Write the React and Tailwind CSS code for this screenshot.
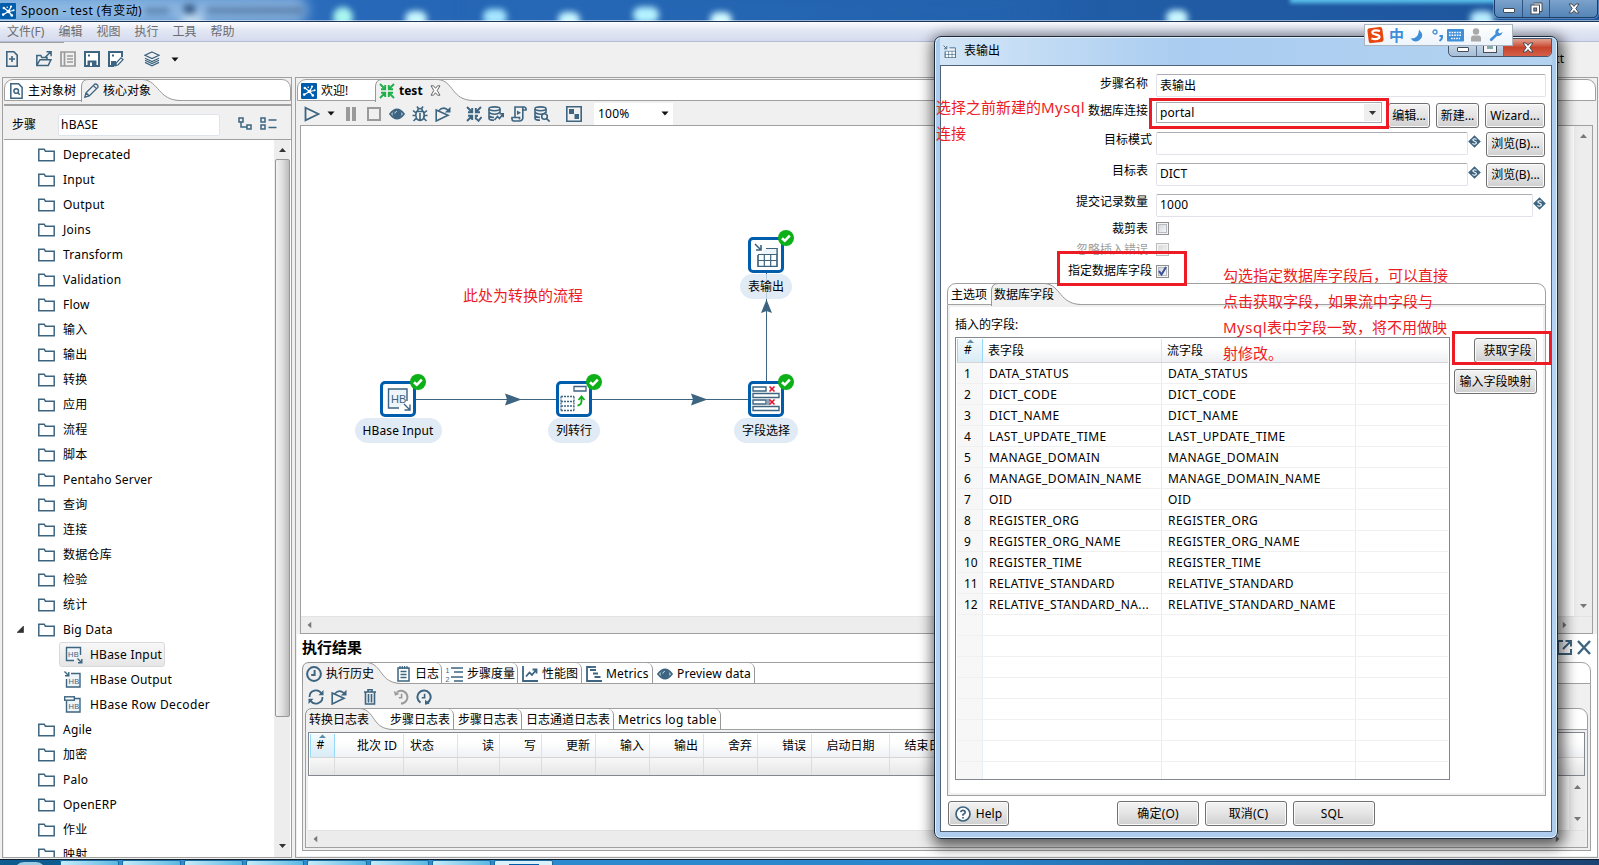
import React from "react";

const INK = "#3d6480";

const treeItems = [
  "Deprecated", "Input", "Output", "Joins", "Transform", "Validation", "Flow",
  "输入", "输出", "转换", "应用", "流程", "脚本", "Pentaho Server", "查询", "连接",
  "数据仓库", "检验", "统计",
];
const treeTail = ["Agile", "加密", "Palo", "OpenERP", "作业", "映射"];

const fields = [
  "DATA_STATUS", "DICT_CODE", "DICT_NAME", "LAST_UPDATE_TIME", "MANAGE_DOMAIN",
  "MANAGE_DOMAIN_NAME", "OID", "REGISTER_ORG", "REGISTER_ORG_NAME", "REGISTER_TIME",
  "RELATIVE_STANDARD", "RELATIVE_STANDARD_NAME",
];

const logColumns = [
  { name: "批次 ID", cls: "w-[69px] justify-end pr-[6px]" },
  { name: "状态", cls: "w-[54px] pl-[6px]" },
  { name: "读", cls: "w-[42px] justify-end pr-[5px]" },
  { name: "写", cls: "w-[42px] justify-end pr-[5px]" },
  { name: "更新", cls: "w-[54px] justify-end pr-[5px]" },
  { name: "输入", cls: "w-[54px] justify-end pr-[5px]" },
  { name: "输出", cls: "w-[54px] justify-end pr-[5px]" },
  { name: "舍弃", cls: "w-[54px] justify-end pr-[5px]" },
  { name: "错误", cls: "w-[54px] justify-end pr-[5px]" },
  { name: "启动日期", cls: "w-[78px] justify-center" },
  { name: "结束日期", cls: "w-[78px] justify-center" },
];

function Icon({ w = 16, h = 16, color = INK, sw = 1.6, className = "", children }) {
  return (
    <svg
      width={w}
      height={h}
      viewBox={`0 0 ${w} ${h}`}
      fill="none"
      stroke={color}
      strokeWidth={sw}
      className={`block shrink-0 ${className}`}
    >
      {children}
    </svg>
  );
}

const Caret = ({ className = "" }) => (
  <Icon w={8} h={5} className={className}>
    <path d="M0.5 0.5h7L4 4.5z" fill="#111" stroke="none" />
  </Icon>
);

const SpoonLogo = () => (
  <Icon color="#fff" sw={1.2}>
    <rect width="16" height="16" rx="1" fill="#005dab" stroke="none" />
    <path d="M8.5 8.5L4 5M8.5 8.5L11 4M8.5 8.5L13.5 7.5M8.5 8.5L11.5 12M8.5 8.5L3.5 11.5" />
    <g fill="#fff" stroke="none">
      <circle cx="8.5" cy="8.5" r="1.8" />
      <circle cx="3.8" cy="5" r="1.2" />
      <circle cx="11" cy="3.5" r="1.1" />
      <circle cx="13.6" cy="7.3" r="1" />
      <circle cx="11.8" cy="12.4" r="1.3" />
      <circle cx="3.2" cy="11.6" r="1.3" />
      <circle cx="7.2" cy="4.3" r="0.8" />
    </g>
  </Icon>
);

const Folder = () => (
  <Icon w={17} h={14} sw={1.5}>
    <path d="M0.8 12.8V1.2h5.4l1.2 2h8.8v9.6z" fill="#fff" />
  </Icon>
);

const Play = () => (
  <Icon sw={1.8}>
    <path d="M1.5 1.8L14.5 8L1.5 14.2z" />
  </Icon>
);

const Replay = () => (
  <Icon sw={1.6}>
    <path d="M1.2 4v11L13 9.2L1.2 4zM4 4.5Q8 0 13 4" />
    <path d="M15.5 0.8v5.7h-5.7z" fill={INK} stroke="none" />
  </Icon>
);

const Eye = () => (
  <Icon sw={1.8}>
    <path d="M1 8Q8 -1.2 15 8Q8 17.2 1 8z" />
    <circle cx="8" cy="8" r="4.6" fill={INK} stroke="none" />
    <path d="M5.8 7.5Q6 5.8 7.8 5.3" stroke="#cfe0ea" strokeWidth="1" />
  </Icon>
);

const Converge = ({ color = INK, check }) => (
  <Icon color={color} sw={1.9}>
    <path d="M1 1l5 5M6.2 2v4.2H2M15 1l-5 5M9.8 2v4.2H14M1 15l5-5M2 9.8h4.2V14" />
    {check ? <path d="M9.8 13.5v-3.7H12M10.5 12.8l2 2L15.6 11" /> : <path d="M15 15l-5-5M14 9.8H9.8V14" />}
  </Icon>
);

const Db = ({ children }) => (
  <Icon sw={1.6}>
    <ellipse cx="6.5" cy="2.8" rx="5.5" ry="1.9" />
    <path d="M1 3v9.5Q1.3 14 6 14.3M12 3v4M1 6.2Q3 8.2 6.5 8.2T12 6.2M1 10Q3 11.4 6 11.5" />
    {children}
  </Icon>
);

const Clock = () => (
  <Icon sw={2}>
    <circle cx="8" cy="8" r="6.9" />
    <path d="M8.6 4v5H5.2" />
  </Icon>
);

const History = ({ color = INK, flip }) => (
  <Icon color={color} sw={2}>
    {flip ? (
      <>
        <path d="M4.5 13.6A6.6 6.6 0 1 1 11 13.9" />
        <path d="M9 10.8v5l4.6-1z" fill={color} stroke="none" />
      </>
    ) : (
      <>
        <path d="M4 3.2A6.4 6.4 0 1 1 8 14.6" />
        <path d="M0.8 2l1.2 4.8L6.4 5z" fill={color} stroke="none" />
      </>
    )}
    <path d="M8.6 4.8v4H5.8" strokeWidth="1.6" />
  </Icon>
);

const HBaseIcon = ({ kind }) => (
  <Icon w={18} h={18} sw={1.4}>
    {kind === "input" && (
      <>
        <path d="M15.5 9V1.5H1.5v13H9" fill="#eef5fa" />
        <path d="M12.5 12.5l4 4M16.8 13v3.8H13" />
      </>
    )}
    {kind === "output" && (
      <>
        <path d="M7 2.5h9v13.5H2.5V8" fill="#eef5fa" />
        <path d="M0.5 0.5l4 4M4.8 1v3.8H1" />
      </>
    )}
    {kind === "decoder" && (
      <>
        <path d="M11 2.5h5V16H2.5V5" fill="#eef5fa" />
        <rect x="0.7" y="0.8" width="9.6" height="3.4" fill="#fff" />
      </>
    )}
    <text
      x={kind === "input" ? 3 : 4.5}
      y={kind === "input" ? 10.5 : 12.5}
      fontSize="7.5"
      fontFamily="Liberation Sans, sans-serif"
      fill={INK}
      stroke="none"
    >
      HB
    </text>
  </Icon>
);

const TableIcon = ({ size = 24 }) => (
  <svg width={size} height={size} viewBox="0 0 24 24" fill="none" stroke={INK} strokeWidth="1.2" className="block shrink-0">
    <path d="M12 5.5h11v18.5H4V12" fill="#fff" />
    <path d="M12 5.5h11V11H6z" fill="#eef5fa" stroke="none" />
    <path d="M4 11.5h19M4 17.5h19M10.3 11.5V24M16.7 11.5V24M12 5.5h11V23.4H4V12" />
    <path d="M1 1l5.5 5.5M7 2v5H2" strokeWidth="1.6" />
  </svg>
);

const Param = () => (
  <Icon w={13} h={13}>
    <path d="M6.5 0.2L12.8 6.5L6.5 12.8L0.2 6.5z" fill={INK} stroke="none" />
    <path d="M8.6 4.4Q6.5 3 4.9 4.4Q4.6 5.8 6.5 6.3Q8.8 7 8.2 8.4Q6.6 10 4.4 8.4" stroke="#fff" strokeWidth="1.1" />
  </Icon>
);

// Selected tab: rounded on the left, swooping curve on the right
function CurveTab({ w, flat, className = "", children }) {
  return (
    <div className={`relative -mt-px -mb-px h-[23px] shrink-0 ${className}`}>
      <svg width={w} height="23" className="absolute left-0 top-0" fill="none">
        <path
          d={`M0.5 23V7Q1 0.5 7 0.5H${flat}C${flat + 16} 2 ${w - 22} 21 ${w} 21.5V23z`}
          fill="#f0f0f0"
        />
        <path
          d={`M0.5 23V7Q1 0.5 7 0.5H${flat}C${flat + 16} 2 ${w - 22} 21 ${w} 21.5`}
          stroke="#979797"
        />
      </svg>
      <div className="relative flex h-[22px] items-center pt-px">{children}</div>
    </div>
  );
}

function Strip({ className = "", children }) {
  return (
    <div className={`flex h-[22px] shrink-0 rounded-t-[9px] border border-[#a0a0a0] bg-white ${className}`}>
      {children}
    </div>
  );
}

function Tab({ className = "", children }) {
  return (
    <div className={`relative flex h-[20px] shrink-0 items-center rounded-tr-[6px] border-r border-[#979797] pt-px whitespace-nowrap ${className}`}>
      {children}
    </div>
  );
}

function Btn({ className = "", children }) {
  return (
    <button
      className={`flex h-[25px] shrink-0 items-center justify-center rounded-[3px] border border-[#707070] bg-linear-to-b from-[#f3f3f3] from-0% via-[#e4e4e4] via-50% to-[#cfcfcf] whitespace-nowrap shadow-[inset_0_0_0_1px_#fbfbfb] ${className}`}
    >
      {children}
    </button>
  );
}

function Arrow({ dir, dim }) {
  const rot = { up: "rotate-180", down: "", left: "rotate-90", right: "-rotate-90" }[dir];
  return (
    <Icon w={7} h={4} className={rot}>
      <path d="M0 0h7L3.5 4z" fill={dim ? "#777" : "#333"} stroke="none" />
    </Icon>
  );
}

function TitleBar() {
  return (
    <div className="relative flex h-[22px] shrink-0 items-center overflow-hidden border-b border-[#1d3557] bg-linear-to-r from-[#4a90d2] from-0% via-[#2768b8] via-22% to-[#1d559b]">
      <div className="absolute left-[500px] top-0 h-[21px] w-[560px] bg-[#2c7ac8]/45 blur-xl" />
      <div className="absolute left-[333px] top-[7px] h-5 w-5 rounded-full bg-[#a9f5f0] blur-[3px]" />
      <div className="absolute left-[180px] top-3 h-4 w-6 rounded-full bg-white/80 blur-[4px]" />
      <div className="absolute -left-8 -top-1 h-7 w-[340px] rounded-full bg-[#a9cbea]/70 blur-[6px]" />
      <div className="absolute left-[405px] top-[11px] h-4 w-[22px] rounded-full bg-[#c8f7ff] blur-[3px]" />
      <div className="absolute left-[483px] top-[9px] h-4 w-[24px] rounded-full bg-[#a5e6ff] blur-[3px]" />
      <div className="absolute left-[558px] top-[12px] h-4 w-[22px] rounded-full bg-[#c8f7ff] blur-[3px]" />
      <div className="absolute left-[633px] top-[7px] h-4 w-[26px] rounded-full bg-[#b4f2ff] blur-[3px]" />
      <div className="absolute left-[710px] top-[12px] h-4 w-[22px] rounded-full bg-[#d2faff] blur-[3px]" />
      <div className="absolute left-[1166px] top-[10px] h-4 w-[22px] rounded-full bg-[#c8f7ff] blur-[3px]" />
      <div className="absolute left-[1290px] -top-[7px] h-[10px] w-[280px] bg-[#5cc4ee] blur-[2px]" />
      <div className="absolute left-[1470px] top-[11px] h-4 w-6 rounded-full bg-[#b9ecff] blur-[3px]" />
      <div className="absolute left-[184px] top-[5px] h-[8px] w-[11px] bg-[#173a68]/80 blur-[3px]" />
      <div className="absolute left-[145px] top-[8px] h-[6px] w-[24px] bg-[#173a68]/40 blur-[3px]" />
      <div className="absolute left-[207px] top-[7px] h-[7px] w-[96px] bg-[#17345f]/35 blur-[3px]" />
      <div className="absolute left-0 bottom-0 h-px w-full bg-white/50" />
      <div className="relative"><SpoonLogo /></div>
      <span className="relative pl-[5px] text-[12px] tracking-[0.42px]">Spoon - test (有变动)</span>
      <div className="absolute left-[1494px] -top-px flex h-[19px] w-[104px] rounded-b-[5px] border border-[#1b3d68] bg-linear-to-b from-[#7ba2ca] to-[#5485b8] shadow-[0_0_0_1px_#9dbfe070]">
        <div className="flex w-[28px] items-center justify-center border-r border-[#2d5482]">
          <span className="mt-1 h-[5px] w-[12px] rounded-[1px] border border-[#444a55] bg-white" />
        </div>
        <div className="flex w-[27px] items-center justify-center border-r border-[#2d5482]">
          <Icon w={13} h={13} color="#444a55" sw={1}>
            <path d="M3.5 1h8.5v8.5h-2.5" fill="#fff" />
            <rect x="1" y="3" width="8.5" height="9" fill="#fff" />
            <rect x="3.8" y="6" width="2.8" height="3" fill="#6d96c0" />
          </Icon>
        </div>
        <div className="flex grow items-center justify-center">
          <CloseGlyph />
        </div>
      </div>
    </div>
  );
}

const CloseGlyph = () => (
  <Icon w={12} h={11} color="#444a55" sw={1}>
    <path d="M1 1h3l2 2.4L8 1h3L7.8 5.5L11 10H8L6 7.6L4 10H1l3.2-4.5z" fill="#fff" />
  </Icon>
);

function MainToolbar() {
  return (
    <div className="relative flex h-[35px] shrink-0 items-center bg-[#f0f0f0] pb-px pl-[6px]">
      <div className="absolute left-0 top-0 h-px w-16 bg-[#a0a0a0]" />
      <Icon w={12}>
        <path d="M0.8 0.8h7l3.4 3.4v11H0.8zM6 5v6M3 8h6" />
      </Icon>
      <Icon className="ml-[18px]" sw={1.5}>
        <path d="M0.8 14.5V4.5h4l1 2H11v2M0.8 14.5L4 8.7h11l-2.8 5.8zM9.5 6L14.5 1M10.5 0.8h4.6v4.5" />
      </Icon>
      <Icon className="ml-2" color="#9a9a9a" sw={2}>
        <path d="M1 1h14v14H1zM4.5 1v14M7 5h6M7 8h6M7 11h6" strokeWidth="1.7" />
      </Icon>
      <Icon className="ml-2" sw={2}>
        <path d="M1 1h14v14H1z" fill="#fff" />
        <path d="M3.5 9.5h9V15h-9z" fill={INK} stroke="none" />
        <path d="M6 11.5h2V15H6z" fill="#fff" stroke="none" />
        <path d="M4 4.5h2" />
      </Icon>
      <Icon className="ml-2" sw={2}>
        <path d="M14 6V1H1v14h5" fill="#fff" />
        <path d="M3 10h5v5H3z" fill={INK} stroke="none" />
        <path d="M4 4.5h2" />
        <path d="M7.5 14.7l0.8-2.8L13 6.8l2 1.8l-4.8 5.2z" fill="#fff" strokeWidth="1.3" />
      </Icon>
      <Icon className="ml-5" sw={1.2}>
        <path d="M8 1l7 3.3L8 7.6L1 4.3zM1 7.2l7 3.4l7-3.4M1 9.2l7 3.4l7-3.4M1 11.4l7 3.4l7-3.4" />
      </Icon>
      <Caret className="ml-[11px]" />
      <span className="ml-auto mr-[35px]">Connect</span>
    </div>
  );
}

function TreeRow({ label }) {
  return (
    <div className="flex h-[25px] shrink-0 items-center pl-[34px]">
      <Folder />
      <span className="pl-[8px]">{label}</span>
    </div>
  );
}

function Sidebar() {
  return (
    <aside className="ml-[2px] flex h-[781px] w-[290px] shrink-0 flex-col border border-[#a0a0a0] bg-[#f0f0f0] pt-px pl-px">
      <Strip>
        <div className="flex w-[76px] items-center pt-px pl-[5px]">
          <Icon w={13} sw={1.5}>
            <path d="M0.8 0.8h7.7l3.6 3.6v10.8H0.8z" />
            <circle cx="6.2" cy="8" r="2.3" />
            <path d="M7.8 9.8l2 2" />
          </Icon>
          <span className="pl-[5px]">主对象树</span>
        </div>
        <CurveTab w={99} flat={62} className="w-[99px]">
          <Icon w={15} h={15} sw={1.3} className="ml-[3px]">
            <path d="M0.8 14.2l1.2-4.4L10.6 1.2q1.4-0.6 2.6 0.6t0.6 2.6L5.2 13zM2 9.8l3.2 3.2M9.4 2.6l3 3" />
          </Icon>
          <span className="pl-[4px]">核心对象</span>
        </CurveTab>
      </Strip>
      <div className="mt-[3px] h-[2px] shrink-0 bg-[#a0a0a0]" />
      <div className="flex h-[34px] shrink-0 items-center border-b border-[#a0a0a0] pt-[4px] pl-[8px]">
        <span>步骤</span>
        <div className="ml-[22px] flex h-[22px] w-[162px] items-center rounded-[2px] border border-[#dfe3ec] bg-white pl-[2px] tracking-[0.2px]">hBASE</div>
        <Icon w={14} h={13} sw={1.5} className="-mt-[3px] ml-[18px]">
          <path d="M1 1h4v4H1zM9 8h4v4H9zM3 5v5h6" />
        </Icon>
        <Icon w={17} h={13} sw={1.5} className="-mt-[3px] ml-[8px]">
          <path d="M1 1h4v4H1zM1 8h4v4H1zM8.5 3h8M8.5 10.5h8" />
        </Icon>
      </div>
      <div className="flex min-h-0 grow bg-white">
        <div className="flex grow flex-col overflow-hidden pt-[2px] tracking-[0.22px]">
          {treeItems.map((t) => (
            <TreeRow key={t} label={t} />
          ))}
          <div className="flex h-[25px] shrink-0 items-center pl-[13px]">
            <Icon w={7} h={7}>
              <path d="M6.5 0v6.5H0z" fill="#333" stroke="#111" strokeWidth="0.5" />
            </Icon>
            <div className="w-[14px]" />
            <Folder />
            <span className="pl-[8px]">Big Data</span>
          </div>
          <div className="ml-[55px] flex h-[25px] w-[106px] shrink-0 items-center rounded-[3px] border border-[#d9d9d9] bg-linear-to-b from-[#f8f8f8] to-[#e6e6e6] pl-[5px] whitespace-nowrap">
            <HBaseIcon kind="input" />
            <span className="pl-[7px]">HBase Input</span>
          </div>
          <div className="flex h-[25px] shrink-0 items-center pl-[60px]">
            <HBaseIcon kind="output" />
            <span className="pl-[8px]">HBase Output</span>
          </div>
          <div className="flex h-[25px] shrink-0 items-center pl-[60px]">
            <HBaseIcon kind="decoder" />
            <span className="pl-[8px] tracking-[0.38px]">HBase Row Decoder</span>
          </div>
          {treeTail.map((t) => (
            <TreeRow key={t} label={t} />
          ))}
        </div>
        <div className="mr-px flex w-[16px] shrink-0 flex-col items-center bg-[#ededed]">
          <div className="flex h-[19px] items-center"><Arrow dir="up" /></div>
          <div className="h-[558px] w-[15px] rounded-[2px] border border-[#979797] bg-linear-to-r from-[#f4f4f4] via-[#dedede] to-[#bcbcbc]" />
          <div className="mt-auto flex h-[19px] items-center pb-[3px]"><Arrow dir="down" /></div>
        </div>
      </div>
    </aside>
  );
}

function CanvasToolbar() {
  return (
    <div className="flex h-[24px] shrink-0 items-center pt-px pl-[7px]">
      <Play />
      <Caret className="ml-[7px]" />
      <Icon w={10} h={14} className="ml-[11px]">
        <path d="M0 0h4v14H0zM6 0h4v14H6z" fill="#9a9a9a" stroke="none" />
      </Icon>
      <Icon w={14} h={14} color="#9a9a9a" sw={2} className="ml-[11px]">
        <path d="M1 1h12v12H1z" />
      </Icon>
      <div className="ml-[8px]"><Eye /></div>
      <Icon className="ml-[7px]" sw={1.6}>
        <path d="M4.5 5.5h7q1.5 4.5 0 7Q8 16.5 4.5 12.5Q3 9 4.5 5.5zM5.5 5.5Q5.5 2.500 8 2.500t2.500 3M5 0.500L6.500 2.800M11 0.500L9.500 2.800M8 7v7M4 7L1 4.500M12 7l3-2.500M3.500 9.500H0.500M12.500 9.500h3M4 12.500l-2.500 2.500M12 12.500l2.500 2.500" />
      </Icon>
      <div className="ml-[7px]"><Replay /></div>
      <div className="ml-[15px]"><Converge check /></div>
      <div className="ml-[6px]">
        <Db>
          <path d="M6.5 14l3-3.5l2 2L15 8M11.5 7.8h3.7v3.5" />
        </Db>
      </div>
      <Icon className="ml-[7px]" sw={1.6}>
        <path d="M4 11V1h9.5Q15.5 1.5 15 4h-3.2M11.8 1.5v11Q11 15 8.5 15H2.5Q0.5 14.5 1 11.5h7.500v2" />
        <path d="M6 4.500l4 2.300l-4 2.300z" fill={INK} stroke="none" />
      </Icon>
      <div className="ml-[7px]">
        <Db>
          <circle cx="10.5" cy="10.5" r="2.8" fill="#f0f0f0" />
          <path d="M12.6 12.6l3 3" />
        </Db>
      </div>
      <Icon className="ml-[16px]" sw={1.6}>
        <path d="M0.8 0.8h14.4v14.4H0.8z" />
        <path d="M3 3h5v5H3zM8.5 8h4.5v5H8.5z" fill={INK} stroke="none" />
      </Icon>
      <div className="ml-[12px] flex h-[22px] w-[79px] items-center bg-white pl-[4px] tracking-[0.2px]">
        <span className="grow">100%</span>
        <Caret className="mr-[4px]" />
      </div>
    </div>
  );
}

const Badge = () => (
  <svg width="16" height="16" viewBox="0 0 16 16" className="absolute -right-[13px] -top-[10px]">
    <circle cx="8" cy="8" r="8" fill="#0eb01a" />
    <path d="M4 8.2l2.8 2.6L11.8 5.6" fill="none" stroke="#fff" strokeWidth="2.6" />
  </svg>
);

function Node({ pos, label, children }) {
  return (
    <div className={`absolute flex w-[100px] flex-col items-center ${pos}`}>
      <div className="relative flex h-[36px] w-[36px] items-center justify-center rounded-[5px] border-[3px] border-[#005dab] bg-white">
        {children}
        <Badge />
      </div>
      <div className="mt-px flex h-[25px] items-center rounded-full bg-[#d9e6f2]/80 px-[8px] whitespace-nowrap">{label}</div>
    </div>
  );
}

function Canvas() {
  return (
    <div className="ml-[3px] flex h-[509px] w-[1293px] shrink-0 flex-col border border-[#a0a0a0] bg-white">
      <div className="flex min-h-0 grow">
        <div className="relative grow">
          <svg width="600" height="330" className="absolute left-0 top-0" stroke={INK} strokeWidth="1">
            <path d="M115 273.5H255M291 273.5H447M465.5 255V147" fill="none" />
            <path d="M204 267.5L220.5 273.5L204 279.5L206 273.5zM390 267.5L406.5 273.5L390 279.5L392 273.5zM460 187L465.5 173.5L471 187L465.5 185z" fill={INK} stroke="none" />
          </svg>
          <Node pos="left-[47px] top-[255px] tracking-[0.12px]" label="HBase Input">
            <svg width="26" height="26" viewBox="0 0 26 26" fill="none" stroke={INK} strokeWidth="1.4">
              <path d="M22 15V3H3.5v19H14" fill="#eef5fa" />
              <path d="M19 18l5.5 5.5M25 18.5v5.5h-5.5" />
              <text x="6" y="17" fontSize="11" fontFamily="Liberation Sans, sans-serif" fill={INK} stroke="none">HB</text>
            </svg>
          </Node>
          <Node pos="left-[223px] top-[255px]" label="列转行">
            <svg width="30" height="30" viewBox="0 0 30 30" fill="none" stroke={INK} strokeWidth="1.3">
              <path d="M15 2.5h12v4.5H15z" />
              <path d="M2 12.5h13M2 17.5h13M2 22h13M2 26.5h13M2 12.5v14M15 12.5v14" strokeDasharray="2 1" />
              <path d="M18.5 21.5Q22.5 21 22.5 17v-4M19.5 16l3-3.5l3 3.5" stroke="#0eb01a" strokeWidth="1.8" />
            </svg>
          </Node>
          <Node pos="left-[415px] top-[255px]" label="字段选择">
            <svg width="30" height="30" viewBox="0 0 30 30" fill="none" stroke={INK} strokeWidth="1.4">
              <path d="M2 3h13v4H2zM2 9.5h26v4H2zM2 16h13v4H2zM2 22.5h26v4H2z" />
              <path d="M16 15h3v6h-3z" fill="#8da5b8" stroke="none" />
              <path d="M18.5 2.5l5 5M23.5 2.5l-5 5M18.5 15.5l5 5M23.5 15.5l-5 5" stroke="#e8112d" strokeWidth="1.6" />
            </svg>
          </Node>
          <Node pos="left-[415px] top-[111px]" label="表输出">
            <TableIcon />
          </Node>
          <div className="absolute left-[162px] top-[157px] text-[15px] leading-[24px] text-[#ed1c24]">此处为转换的流程</div>
        </div>
        <div className="flex w-[18px] shrink-0 flex-col items-center justify-between bg-[#ededed] py-[8px]">
          <Arrow dir="up" dim />
          <Arrow dir="down" dim />
        </div>
      </div>
      <div className="flex h-[17px] shrink-0 items-center justify-between border-t border-[#e3e3e3] bg-[#ededed] pl-[5px] pr-[24px]">
        <Arrow dir="left" dim />
        <Arrow dir="right" dim />
      </div>
    </div>
  );
}

function SortHead() {
  return (
    <div className="flex h-full shrink-0 flex-col items-center border-x border-[#96d9f9] bg-linear-to-b from-[#f3fafd] to-[#d8ecf6]">
      <Icon w={7} h={4}>
        <path d="M0 4L3.5 0.5L7 4z" fill="#5f8ba8" stroke="none" />
      </Icon>
      <span className="pr-[4px] leading-[14px]">#</span>
    </div>
  );
}

function Results() {
  return (
    <div className="flex min-h-0 grow flex-col bg-white">
      <div className="flex h-[28px] shrink-0 items-center pb-[2px] pl-[5px]">
        <span className="text-[15px] font-bold">执行结果</span>
        <div className="ml-auto flex gap-[5px] pr-[6px]">
          <Icon w={15} h={15} sw={2}>
            <path d="M6 1H1v13h13V9M6 9l7-7M8.5 1H14v5.5" />
          </Icon>
          <Icon w={14} h={15} sw={2.4}>
            <path d="M1 1l12 13M13 1L1 14" />
          </Icon>
        </div>
      </div>
      <div className="ml-[5px] mr-[6px] flex h-[189px] shrink-0 flex-col">
        <Strip>
          <CurveTab w={99} flat={65} className="-ml-px w-[92px]">
            <div className="ml-[4px]"><Clock /></div>
            <span className="pl-[4px]">执行历史</span>
          </CurveTab>
          <Tab className="w-[48px]">
            <Icon w={13} className="ml-[3px]" sw={1.5}>
              <path d="M1 2h11v13H1zM3.5 5.5h6M3.5 8.5h6M3.5 11.5h6" />
              <path d="M3 0v3M5.3 0v3M7.6 0v3M10 0v3" strokeWidth="1.2" />
            </Icon>
            <span className="pl-[5px]">日志</span>
          </Tab>
          <Tab className="w-[76px]">
            <Icon w={18} className="ml-[3px]" sw={1.6}>
              <path d="M6 2h12M9 6h9M6 11h12M9 15h9" />
              <text x="0.5" y="6.5" fontSize="7" fontFamily="Liberation Sans, sans-serif" fill={INK} stroke="none">1</text>
              <text x="0.5" y="15.5" fontSize="7" fontFamily="Liberation Sans, sans-serif" fill={INK} stroke="none">2</text>
            </Icon>
            <span className="pl-[4px]">步骤度量</span>
          </Tab>
          <Tab className="w-[64px]">
            <Icon className="ml-[4px]" sw={1.8}>
              <path d="M1 0v15h15M4 10.5l3.5-4L10 9l4-5M10.5 3.5h4v4" />
            </Icon>
            <span className="pl-[4px]">性能图</span>
          </Tab>
          <Tab className="w-[71px] tracking-[0.15px]">
            <Icon className="ml-[4px]" sw={1.8}>
              <path d="M5 1H1v14h15M4 4h6M7 7.5h5M8.5 11h6" />
              <path d="M5 1h5" />
            </Icon>
            <span className="pl-[4px]">Metrics</span>
          </Tab>
          <Tab className="w-[102px] tracking-[0.17px]">
            <div className="ml-[4px]"><Eye /></div>
            <span className="pl-[4px]">Preview data</span>
          </Tab>
        </Strip>
        <div className="flex min-h-0 grow flex-col border-x border-b border-[#a0a0a0] bg-[#f0f0f0] px-[2px] pb-[2px]">
          <div className="flex h-[24px] shrink-0 items-center pt-[2px] pl-[3px]">
            <Icon sw={1.8}>
              <path d="M1.5 8A6.5 6.5 0 0 1 13.5 4.5M14.5 8A6.5 6.5 0 0 1 2.5 11.5" />
              <path d="M15.5 1v5.2h-5zM0.5 15V9.8h5z" fill={INK} stroke="none" />
            </Icon>
            <div className="ml-[7px]"><Replay /></div>
            <Icon w={12} className="ml-[17px]" sw={1.6}>
              <path d="M0 3h12M4 2.5V0.8h4v1.7M1.5 3.5V15h9V3.5M4.500 5v8.500M7.500 5v8.500" />
            </Icon>
            <div className="ml-[17px]"><History color="#9a9a9a" /></div>
            <div className="ml-[7px]"><History flip /></div>
          </div>
          <Strip>
            <CurveTab w={88} flat={55} className="-ml-px w-[80px]">
              <span className="pl-[4px] whitespace-nowrap">转换日志表</span>
            </CurveTab>
            <Tab className="w-[69px] pl-[5px]">步骤日志表</Tab>
            <Tab className="w-[68px] pl-[4px]">步骤日志表</Tab>
            <Tab className="w-[92px] pl-[4px]">日志通道日志表</Tab>
            <Tab className="w-[107px] pl-[4px] tracking-[0.29px]">Metrics log table</Tab>
          </Strip>
          <div className="flex min-h-0 grow flex-col border-x border-b border-[#a0a0a0] px-[2px] pt-[2px]">
            <div className="flex h-[44px] shrink-0 flex-col border border-[#828790] bg-white pt-px pl-px">
              <div className="flex h-[24px] shrink-0 overflow-hidden border-b border-[#d5d5d5] bg-linear-to-b from-white from-35% to-[#eff1f4]">
                <div className="w-[25px] shrink-0 *:w-full"><SortHead /></div>
                {logColumns.map((c) => (
                  <div key={c.name} className={`flex shrink-0 items-center border-r border-[#dfe2e6] ${c.cls}`}>{c.name}</div>
                ))}
              </div>
              <div className="flex h-[17px] bg-linear-to-b from-[#f8f8f8] to-[#e6e6e6]">
                <div className="w-[25px] shrink-0 border-r border-[#dcdcdc]" />
                {logColumns.map((c) => (
                  <div key={c.name} className={`shrink-0 border-r border-[#dcdcdc] ${c.cls}`} />
                ))}
              </div>
            </div>
            <div className="flex min-h-0 grow bg-white">
              <div className="grow" />
              <div className="flex w-[16px] flex-col items-center justify-between bg-[#ededed] py-[9px]">
                <Arrow dir="up" dim />
                <Arrow dir="down" dim />
              </div>
            </div>
            <div className="flex h-[17px] shrink-0 items-center justify-between border-t border-[#e3e3e3] bg-[#ececec] pl-[4px] pr-[24px]">
              <Arrow dir="left" dim />
              <Arrow dir="right" dim />
            </div>
          </div>
        </div>
      </div>
    </div>
  );
}

function Workspace() {
  return (
    <main className="ml-[3px] flex h-[781px] w-[1303px] shrink-0 flex-col border border-[#a0a0a0] bg-[#f0f0f0] pt-px pl-px pb-px">
      <Strip className="mr-px">
        <div className="flex w-[77px] items-center pt-px pl-[3px]">
          <SpoonLogo />
          <span className="pl-[4px]">欢迎!</span>
        </div>
        <CurveTab w={98} flat={63} className="w-[98px]">
          <div className="ml-[4px]"><Converge color="#1fb04a" /></div>
          <span className="pl-[4px] font-bold">test</span>
          <Icon w={11} h={11} color="#666" sw={1} className="ml-[7px]">
            <path d="M1 0.8h2.5L5.5 3.3L7.5 0.8H10L7.2 5.500L10 10.200H7.500L5.500 7.700L3.500 10.200H1L3.800 5.500z" fill="#fff" />
          </Icon>
        </CurveTab>
      </Strip>
      <CanvasToolbar />
      <Canvas />
      <Results />
    </main>
  );
}

function Label({ children, className = "" }) {
  return <span className={`w-[206px] shrink-0 text-right ${className}`}>{children}</span>;
}

function Field({ children, className = "" }) {
  return (
    <div className={`flex h-[23px] shrink-0 items-center rounded-[2px] border border-[#e2e3ea] border-t-[#abadb3] bg-white pl-[3px] ${className}`}>
      {children}
    </div>
  );
}

function Check({ on, dim }) {
  return (
    <span className={`flex h-[13px] w-[13px] shrink-0 items-center justify-center border bg-[#f4f4f4] ${dim ? "border-[#bcbcbc]" : "border-[#8e8f8f]"}`}>
      <span className={`flex h-[9px] w-[9px] items-center justify-center border bg-linear-to-br from-[#d5d8dc] to-[#f6f6f6] ${dim ? "border-[#e6e6e6]" : "border-[#b8bcc2]"}`}>
        {on && (
          <Icon w={9} h={10} color="#3b4f9a" sw={2} className="-mt-px">
            <path d="M1 5l2.5 3.5L8 1" />
          </Icon>
        )}
      </span>
    </span>
  );
}

function FieldTable() {
  const rows = [...fields, ...Array(8).fill("")];
  return (
    <div className="flex h-[443px] w-[495px] shrink-0 flex-col overflow-hidden border border-[#828790] bg-white p-px">
      <div className="flex h-[24px] shrink-0 border-b border-[#d5d5d5] bg-linear-to-b from-white from-35% to-[#eff0f3]">
        <div className="w-[26px] shrink-0 *:w-full"><SortHead /></div>
        <div className="flex w-[179px] shrink-0 items-center border-r border-[#dfe2e6] pl-[5px]">表字段</div>
        <div className="flex w-[194px] shrink-0 items-center border-r border-[#dfe2e6] pl-[5px]">流字段</div>
      </div>
      {rows.map((f, i) => (
        <div key={i} className="flex h-[21px] shrink-0 border-b border-[#f0f0f0] *:pt-px">
          <div className="flex w-[26px] shrink-0 items-center border-r border-[#e6edf6] bg-[#f7f7f7] pl-[7px]">{f && i + 1}</div>
          <div className="flex w-[179px] shrink-0 items-center border-r border-[#e6edf6] pl-[6px] tracking-[0.42px]">
            {i === 11 ? "RELATIVE_STANDARD_NA..." : f}
          </div>
          <div className="flex w-[194px] shrink-0 items-center border-r border-[#e6edf6] pl-[6px] tracking-[0.42px]">{f}</div>
        </div>
      ))}
    </div>
  );
}

function Dialog() {
  return (
    <div className="absolute left-[934px] top-[36px] flex h-[803px] w-[624px] flex-col rounded-[7px] border border-[#1c2a3c] bg-linear-to-b from-[#a9cbec] via-[#b6d6f8] to-[#aecdee] px-[5px] pb-[6px] shadow-[inset_0_0_0_1px_#e3f1fc,2px_4px_14px_4px_rgba(0,0,0,0.6)]">
      <div className="mt-px flex h-[27px] shrink-0 items-center bg-linear-to-r from-[#d3e6f7] via-[#a9ccf0] via-40% to-[#b4d3f0] pl-[3px]">
        <div className="flex items-center pb-px">
          <TableIcon size={13} />
          <span className="pl-[8px]">表输出</span>
        </div>
        <div className="mb-auto ml-auto flex h-[19px] w-[104px] overflow-hidden rounded-b-[5px] border border-[#48586c] bg-linear-to-b from-[#d4e2f0] to-[#a5bdd6]">
          <div className="flex w-[28px] items-center justify-center border-r border-[#5a6d84]">
            <span className="mt-1 h-[5px] w-[12px] rounded-[1px] border border-[#444a55] bg-white" />
          </div>
          <div className="flex w-[27px] items-center justify-center border-r border-[#5a6d84]">
            <span className="h-[9px] w-[12px] border-[3px] border-[#f6f6f6] bg-[#8aa] outline outline-[#444a55]" />
          </div>
          <div className="flex grow items-center justify-center bg-linear-to-b from-[#e0a090] via-[#c8432b] via-50% to-[#d4604a]">
            <CloseGlyph />
          </div>
        </div>
      </div>
      <div className="flex min-h-0 grow flex-col border border-[#4f6277] bg-white">
        <div className="flex h-[31px] shrink-0 items-end">
          <Label className="w-[207px] pb-[5px]">步骤名称</Label>
          <Field className="ml-[8px] w-[390px] pt-px">表输出</Field>
        </div>
        <div className="flex h-[31px] shrink-0 items-end">
          <Label className="w-[207px] pb-[9px]">数据库连接</Label>
          <div className="mb-[5px] ml-[8px] flex h-[21px] w-[226px] shrink-0 items-center border border-[#a5a9b0] bg-white pr-px pl-[3px]">
            <span className="grow tracking-[0.1px]">portal</span>
            <span className="flex h-[17px] w-[16px] items-center justify-center bg-[#eeeeee]"><Arrow dir="down" /></span>
          </div>
          <Btn className="ml-[6px] w-[42px]">编辑...</Btn>
          <Btn className="ml-[6px] w-[43px]">新建...</Btn>
          <Btn className="ml-[6px] w-[60px] tracking-[0.15px]">Wizard...</Btn>
        </div>
        <div className="flex h-[30px] shrink-0 items-center">
          <Label className="w-[211px] pb-[6px]">目标模式</Label>
          <Field className="ml-[4px] w-[312px]" />
          <div className="mb-[4px]"><Param /></div>
          <Btn className="ml-[5px] mt-[2px] w-[59px]">浏览(B)...</Btn>
        </div>
        <div className="flex h-[31px] shrink-0 items-center pt-[1px]">
          <Label className="w-[207px] pb-[6px]">目标表</Label>
          <Field className="ml-[8px] w-[312px]">DICT</Field>
          <div className="mb-[4px]"><Param /></div>
          <Btn className="ml-[5px] mt-[2px] w-[59px]">浏览(B)...</Btn>
        </div>
        <div className="flex h-[31px] shrink-0 items-center pt-[1px]">
          <Label className="w-[207px] pb-[6px]">提交记录数量</Label>
          <Field className="ml-[8px] w-[377px] tracking-[0.2px]">1000</Field>
          <div className="mb-[4px]"><Param /></div>
        </div>
        <div className="flex h-[17px] shrink-0 items-center">
          <Label className="w-[207px]">裁剪表</Label>
          <div className="ml-[8px]"><Check /></div>
        </div>
        <div className="flex h-[25px] shrink-0 items-center text-[#9c9c9c]">
          <Label className="w-[207px]">忽略插入错误</Label>
          <div className="ml-[8px]"><Check dim /></div>
        </div>
        <div className="flex h-[21px] shrink-0 items-center pb-[3px]">
          <Label className="w-[211px]">指定数据库字段</Label>
          <div className="ml-[4px]"><Check on /></div>
        </div>
        <div className="mr-[5px] ml-[6px] flex h-[513px] shrink-0 flex-col">
          <Strip>
            <span className="flex w-[43px] shrink-0 items-center pt-px pl-[3px]">主选项</span>
            <CurveTab w={90} flat={54} className="w-[90px]">
              <span className="pl-[3px] whitespace-nowrap">数据库字段</span>
            </CurveTab>
          </Strip>
          <div className="flex min-h-0 grow border-x border-b border-[#a0a0a0] bg-[#f0f0f0] px-[2px] pt-[2px] pb-[2px]">
            <div className="flex min-w-0 grow flex-col bg-white pl-[5px]">
              <span className="flex h-[30px] shrink-0 items-center pt-[5px]">插入的字段:</span>
              <div className="flex">
                <FieldTable />
                <div className="flex w-[87px] flex-col items-end gap-[6px] pt-px">
                  <Btn className="w-[63px] pl-[4px]">获取字段</Btn>
                  <Btn className="w-[83px]">输入字段映射</Btn>
                </div>
              </div>
            </div>
          </div>
        </div>
        <div className="flex pt-[5px] pl-[7px] tracking-[0.15px]">
          <Btn className="w-[61px] gap-[5px]">
            <Icon sw={1.7}>
              <circle cx="8" cy="8" r="7" fill="#fff" />
              <path d="M5.8 6.2Q6 4.3 8 4.3t2.2 1.9Q10.2 7.5 8 8.5V9.8M8 11v1.5" />
            </Icon>
            Help
          </Btn>
          <Btn className="ml-[108px] w-[82px]">确定(O)</Btn>
          <Btn className="ml-[6px] w-[82px] pl-[5px]">取消(C)</Btn>
          <Btn className="ml-[6px] w-[82px] pr-[4px]">SQL</Btn>
        </div>
      </div>
    </div>
  );
}

function ImeBar() {
  const blue = "#3f8ed8";
  return (
    <div className="absolute left-[1364px] top-[24px] flex h-[22px] w-[149px] items-center border border-[#a9b4bf] bg-linear-to-b from-white to-[#edf4fb] pl-[2px]">
      <Icon w={18} h={18}>
        <rect x="1" y="1.5" width="15" height="15" rx="2.5" transform="rotate(-7 9 9)" fill="#e8450f" stroke="none" />
        <path d="M13 5Q8 3.5 5.5 5.5Q4.5 8 9 8.7Q14 9.5 12 12Q9 14 4.5 12.5" stroke="#fff" strokeWidth="2.2" />
      </Icon>
      <span className="ml-[4px] w-[16px] text-[15px] leading-[18px] font-bold text-[#3f8ed8]">中</span>
      <Icon w={13} h={13} className="ml-[5px]">
        <path d="M9 0.5Q15.5 7 9 11.5Q4 14 0.5 9.5Q9 10 9 0.5z" fill={blue} stroke="none" />
      </Icon>
      <Icon w={11} h={14} color={blue} sw={1.3} className="ml-[9px]">
        <circle cx="3" cy="4" r="2" />
        <path d="M7.5 8h2.5q0.5 3-2.5 5" strokeWidth="2" />
      </Icon>
      <Icon w={17} h={13} className="ml-[4px]">
        <rect width="17" height="12.5" rx="1" fill={blue} stroke="none" />
        <path d="M2 3.5h13M2 6.3h13M4 9.5h9" stroke="#fff" strokeWidth="1.5" strokeDasharray="1.6 1" />
      </Icon>
      <Icon w={12} h={14} className="ml-[6px]">
        <circle cx="6" cy="3.5" r="3.2" fill="#a9a9a9" stroke="none" />
        <path d="M1 13.500V10q0-2.500 2.500-2.500h5Q11 7.500 11 10v3.500z" fill="#a9a9a9" stroke="none" />
      </Icon>
      <Icon w={14} h={14} className="ml-[7px]">
        <path d="M9 0.5Q5.5 2 6.5 6L0.8 11q-0.5 2 1.8 2.3L8 8q4.5 0.5 5.5-4L10.800 5.500L9 4L10.500 1z" fill={blue} stroke="none" />
      </Icon>
    </div>
  );
}

function Taskbar() {
  return (
    <div className="flex h-[6px] shrink-0 overflow-hidden border-t border-[#10202f] bg-linear-to-r from-[#2f8fd0] via-[#2a86cc] via-60% to-[#1a4272]">
      <div className="flex w-[60px] shrink-0 justify-center bg-[#0e5c8f]">
        <div className="mt-[2px] h-5 w-8 rounded-full bg-[#9ccbe4]" />
      </div>
      <div className="flex gap-[3px]">
        {[59, 59, 59, 58, 60, 59, 59].map((w, i) => (
          <div key={i} className="h-[8px] rounded-t-[2px] border border-[#1b6b9e] bg-linear-to-r from-[#c4ecf9] to-[#58b8e3]" style={{ width: w }} />
        ))}
        <div className="flex h-[8px] w-[59px] justify-center rounded-t-[2px] border border-[#1b6b9e] bg-[#d9f2fb] pt-[3px]">
          <span className="h-[4px] w-[30px] bg-[#005dab]" />
        </div>
      </div>
    </div>
  );
}

export default function App() {
  return (
    <div className="relative flex h-[865px] w-[1599px] flex-col overflow-hidden bg-[#f0f0f0] font-['Noto_Sans','Noto_Sans_CJK_SC',sans-serif] text-[12px] leading-[16px] text-black">
      <TitleBar />
      <div className="flex h-[20px] shrink-0 items-center gap-[14px] border-b border-[#b4bdd4] bg-linear-to-b from-[#fcfdfe] via-[#e4e8f5] via-40% to-[#d5dbee] pl-[7px] text-[#6d6d6d]">
        {["文件(F)", "编辑", "视图", "执行", "工具", "帮助"].map((m) => (
          <span key={m}>{m}</span>
        ))}
      </div>
      <MainToolbar />
      <div className="flex h-[782px] shrink-0">
        <Sidebar />
        <Workspace />
      </div>
      <Taskbar />
      <Dialog />

      {/* red notes and frames drawn on top of everything */}
      <div className="absolute left-[936px] top-[94px] w-[156px] text-[15px] leading-[26px] whitespace-nowrap text-[#ed1c24]">
        选择之前新建的<span className="tracking-[0.5px]">Mysql</span>
        <br />
        连接
      </div>
      <div className="absolute left-[1223px] top-[262px] text-[15px] leading-[26px] whitespace-nowrap text-[#ed1c24]">
        勾选指定数据库字段后，可以直接
        <br />
        点击获取字段，如果流中字段与
        <br />
        <span className="tracking-[0.5px]">Mysql</span>表中字段一致，将不用做映
        <br />
        射修改。
      </div>
      <div className="absolute left-[1149px] top-[98px] h-[31px] w-[240px] border-[3px] border-[#ed1c24]" />
      <div className="absolute left-[1057px] top-[251px] h-[35px] w-[130px] border-[3px] border-[#ed1c24]" />
      <div className="absolute left-[1452px] top-[331px] h-[34px] w-[100px] border-[3px] border-[#ed1c24]" />
      <ImeBar />
    </div>
  );
}
